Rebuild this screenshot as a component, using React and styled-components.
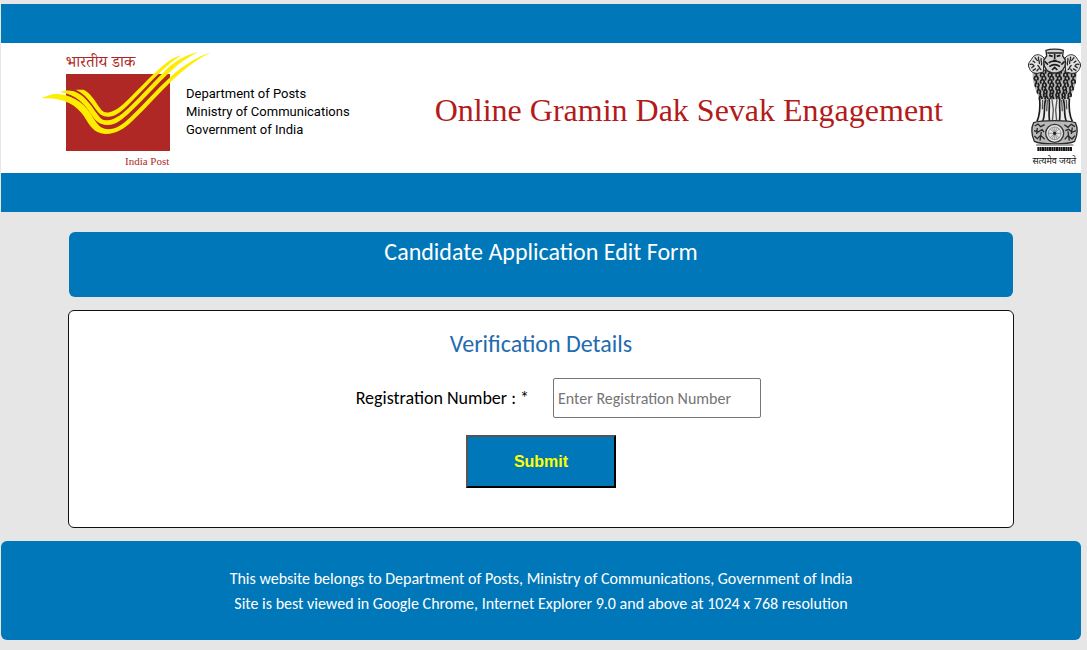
import styled, { createGlobalStyle } from "styled-components";

const FOOTER_LINES = [
  "This website belongs to Department of Posts, Ministry of Communications, Government of India",
  "Site is best viewed in Google Chrome, Internet Explorer 9.0 and above at 1024 x 768 resolution",
];

export default function App() {
  return (
    <>
      <GlobalStyle />
      <Page>
        <Header>
          <Strip />
          <Banner>
            <IndiaPostLogo />
            <Department>
              Department of Posts
              <br />
              Ministry of Communications
              <br />
              Government of India
            </Department>
            <SiteTitle>Online Gramin Dak Sevak Engagement</SiteTitle>
            <Emblem />
          </Banner>
          <Strip />
        </Header>

        <Main>
          <FormTitle>Candidate Application Edit Form</FormTitle>
          <FormCard onSubmit={(e) => e.preventDefault()}>
            <CardTitle>Verification Details</CardTitle>
            <Field>
              <Label htmlFor="registration">Registration Number : *</Label>
              <Input
                id="registration"
                type="text"
                placeholder="Enter Registration Number"
              />
            </Field>
            <SubmitButton type="submit">Submit</SubmitButton>
          </FormCard>
        </Main>

        <Footer>
          {FOOTER_LINES.map((line) => (
            <FooterLine key={line}>{line}</FooterLine>
          ))}
        </Footer>
      </Page>
    </>
  );
}

function IndiaPostLogo() {
  return (
    <LogoSvg viewBox="30 24 435 360" role="img" aria-label="India Post">
      <rect x="108" y="102" width="312" height="231" fill="#b02825" />
      <LogoHindi x="107" y="82">भारतीय डाक</LogoHindi>
      <LogoName x="418" y="376">India Post</LogoName>
      <g fill="#ffed00">
        <path d="M34 175 C48 168 66 161 80 161 C122 164 158 184 181 219 C196 243 207 267 233 268 C258 268 278 254 301 232 C344 190 379 149 422 110 C460 76 500 49 542 38 C505 54 467 84 431 117 C389 157 351 202 307 243 C280 268 256 283 225 282 C190 280 177 253 162 229 C137 191 96 171 34 175 Z" />
        <path d="M90 156 C103 151 116 150 132 154 C164 166 181 193 200 220 C212 237 217 242 235 241 C258 238 278 221 298 202 C338 163 371 125 411 86 C437 63 465 45 506 36 C476 50 448 68 422 94 C381 133 346 173 304 213 C278 238 257 256 231 255 C207 254 196 242 185 225 C162 190 138 163 90 156 Z" />
        <path d="M137 149 L160 149 C181 158 194 181 209 203 C218 216 225 219 238 217 C259 213 282 191 302 171 C338 135 369 101 402 74 C419 60 434 51 454 46 C431 60 413 76 394 94 C362 124 335 155 304 185 C280 209 259 229 237 230 C218 231 208 224 195 205 C178 180 161 159 137 149 Z" />
      </g>
    </LogoSvg>
  );
}

function LionHead({ x, y, flip }) {
  return (
    <g transform={`translate(${x} ${y}) scale(${flip ? -1 : 1} 1)`}>
      <path
        d="M24 -12 C16 -22 4 -24 -2 -20 C-10 -18 -12 -8 -18 -2 C-24 4 -24 14 -19 20 C-18 28 -8 34 4 34 L22 30 Z"
        fill="#e2e2e2"
        stroke="#2a2a2a"
        strokeWidth="3"
      />
      <path
        d="M-4 -14 C2 -10 0 -4 6 -4 M-10 -4 L-2 2 M-19 8 C-12 4 -8 8 -6 12 L-14 18 M-10 26 L0 20 M8 -16 C4 -8 12 -4 10 6 M16 -12 C12 -4 20 2 16 10 M4 10 C12 12 8 20 16 24 M2 28 L8 20"
        stroke="#2a2a2a"
        strokeWidth="4"
        fill="none"
      />
    </g>
  );
}

function Emblem() {
  // rows of short locks, narrowing towards the legs
  const locks = [];
  for (let row = 0; row < 9; row += 1) {
    const half = row < 4 ? 58 : 58 - (row - 3) * 3;
    for (let col = -5; col <= 5; col += 1) {
      locks.push([164 + (col * half) / 5 + (row % 2 ? 4 : -3), 124 + row * 10]);
    }
  }

  return (
    <EmblemSvg viewBox="84 54 159 360" role="img" aria-label="State Emblem of India">
      {/* manes and chests */}
      <path
        d="M98 118 C96 142 102 174 112 190 L120 216 L208 216 L216 190 C226 174 232 142 230 118 Z"
        fill="#b5b5b5"
      />
      {locks.map(([x, y], i) => (
        <path
          key={`${x}-${y}`}
          d={
            i % 2
              ? `M${x - 4} ${y - 5} q6 4 2 12`
              : `M${x + 4} ${y - 5} q-7 4 -2 12`
          }
          stroke="#1c1c1c"
          strokeWidth="5"
          fill="none"
        />
      ))}
      <LionHead x={108} y={96} />
      <LionHead x={219} y={96} flip />
      {/* front lion */}
      <path
        d="M140 78 L138 61 C150 56 178 56 190 61 L188 78 C200 90 199 108 188 120 C176 132 152 132 140 120 C129 108 128 90 140 78 Z"
        fill="#d2d2d2"
        stroke="#2a2a2a"
        strokeWidth="4"
      />
      <path
        d="M142 69 H186 M147 76 L158 79 M181 76 L170 79 M164 72 V88 M159 92 H170 M146 98 C156 92 172 92 182 98 M148 110 C158 102 170 102 180 110 M134 94 L144 104 M194 94 L184 104 M156 120 L164 112 L172 120"
        stroke="#1c1c1c"
        strokeWidth="5"
        fill="none"
      />
      {/* legs */}
      <path
        d="M120 208 C116 232 118 252 111 276 L216 276 C209 252 212 232 207 208 Z"
        fill="#ececec"
      />
      <path
        d="M119 206 C121 232 120 254 111 274 M137 208 C130 230 137 254 128 274 M147 206 C151 226 144 250 149 274 M180 206 C176 226 183 250 178 274 M190 208 C197 230 190 254 199 274 M208 206 C206 232 207 254 217 274"
        stroke="#1c1c1c"
        strokeWidth="5"
        fill="none"
      />
      <path
        d="M128 210 L127 238 M156 208 L160 240 L157 274 M171 208 L167 240 L170 274 M199 210 L200 238 M142 210 L140 244 M185 210 L187 244"
        stroke="#555"
        strokeWidth="4"
        fill="none"
      />
      {/* abacus with the wheel */}
      <path
        d="M101 278 C122 270 205 270 226 278 C234 294 232 316 224 334 C205 344 122 344 103 334 C95 316 93 294 101 278 Z"
        fill="#b9b9b9"
        stroke="#2a2a2a"
        strokeWidth="4"
      />
      <circle cx="164" cy="310" r="27" fill="#e4e4e4" stroke="#333" strokeWidth="4" />
      <circle cx="164" cy="310" r="19" fill="none" stroke="#777" strokeWidth="2" />
      <path
        d="M164 290 V330 M144 310 H184 M150 296 L178 324 M178 296 L150 324 M156 292 L172 328 M172 292 L156 328"
        stroke="#777"
        strokeWidth="2"
      />
      <circle cx="164" cy="310" r="5" fill="#222" />
      <path
        d="M104 288 L114 282 L122 290 L134 284 M102 302 L114 306 L126 299 L132 306 M103 318 L112 326 L122 316 L134 328 M112 294 L110 312 M124 306 L120 332 M193 284 L204 292 L214 283 L225 290 M196 302 L206 298 L216 307 L228 302 M194 328 L204 317 L216 327 L225 317 M217 292 L214 312 M204 304 L208 332"
        stroke="#2a2a2a"
        strokeWidth="4"
        fill="none"
      />
      {/* plinth */}
      <path d="M108 345 H220" stroke="#8a8a8a" strokeWidth="4" />
      <path d="M112 357 H217" stroke="#161616" strokeWidth="12" strokeDasharray="6 1" />
      <Motto x="163" y="402">सत्यमेव जयते</Motto>
    </EmblemSvg>
  );
}

/* ─── Page ─── */

const GlobalStyle = createGlobalStyle`
  * {
    box-sizing: border-box;
  }

  body {
    margin: 0;
    background: #e6e6e6;
    color: #000;
    font-family: Carlito, Lato, sans-serif;
  }
`;

const Page = styled.div`
  padding: 4px 6px 10px 1px;
`;

/* ─── Header ─── */

const Header = styled.header`
  background: #fff;
`;

const Strip = styled.div`
  height: 39px;
  background: #0077b8;
`;

const Banner = styled.div`
  display: flex;
  align-items: center;
  height: 130px;
  padding-left: 39px;
`;

const LogoSvg = styled.svg`
  flex: none;
  width: 145px;
  height: 120px;
  overflow: visible;
`;

const LogoHindi = styled.text`
  fill: #b02825;
  font-family: "Noto Serif Devanagari", "Noto Sans Devanagari", "Noto Sans", serif;
  font-size: 48px;
`;

const LogoName = styled.text`
  fill: #b02825;
  font-family: "Liberation Serif", serif;
  font-size: 33px;
  text-anchor: end;
`;

const Department = styled.p`
  flex: none;
  margin: 0;
  padding: 8px 0 0 1px;
  font-family: Roboto, sans-serif;
  font-size: 13px;
  line-height: 18px;
`;

const SiteTitle = styled.h1`
  flex: 1;
  margin: 0;
  padding-top: 4px;
  color: #b31b1b;
  font-family: "Liberation Serif", serif;
  font-size: 32px;
  font-weight: 400;
  text-align: center;
`;

const EmblemSvg = styled.svg`
  flex: none;
  width: 53px;
  height: 120px;
`;

const Motto = styled.text`
  fill: #111;
  font-family: "Noto Sans Devanagari", "Noto Sans", sans-serif;
  font-size: 27px;
  text-anchor: middle;
`;

/* ─── Form ─── */

const Main = styled.main`
  margin: 20px 67px 13px;
`;

const FormTitle = styled.h2`
  height: 65px;
  margin: 0 1px 13px;
  border-radius: 6px;
  background: #0077b8;
  color: #fff;
  font-size: 24px;
  font-weight: 400;
  line-height: 40px;
  text-align: center;
`;

const FormCard = styled.form`
  padding: 15px 0 39px;
  border: 1px solid #111;
  border-radius: 6px;
  background: #fff;
`;

const CardTitle = styled.h3`
  margin: 0 0 16px;
  color: #1f6cb0;
  font-size: 24px;
  font-weight: 400;
  line-height: 36px;
  text-align: center;
`;

const Field = styled.div`
  display: grid;
  grid-template-columns: 1fr 1fr;
  column-gap: 24px;
  align-items: center;
`;

const Label = styled.label`
  font-size: 18px;
  text-align: right;
`;

const Input = styled.input`
  width: 208px;
  height: 40px;
  padding: 0 4px;
  border: 1px solid #767676;
  border-radius: 2px;
  background: #fff;
  font-family: inherit;
  font-size: 16px;

  &::placeholder {
    color: #757575;
  }
`;

const SubmitButton = styled.button`
  display: block;
  width: 150px;
  height: 53px;
  margin: 17px auto 0;
  border: 2px outset #000;
  background: #0077b8;
  color: #ff0;
  font-family: "Liberation Sans", sans-serif;
  font-size: 16px;
  font-weight: 700;
`;

/* ─── Footer ─── */

const Footer = styled.footer`
  padding: 25px 0 24px;
  border-radius: 6px;
  background: #0077b8;
  color: #fff;
  text-align: center;
`;

const FooterLine = styled.p`
  margin: 0;
  font-size: 16px;
  line-height: 25px;
`;
